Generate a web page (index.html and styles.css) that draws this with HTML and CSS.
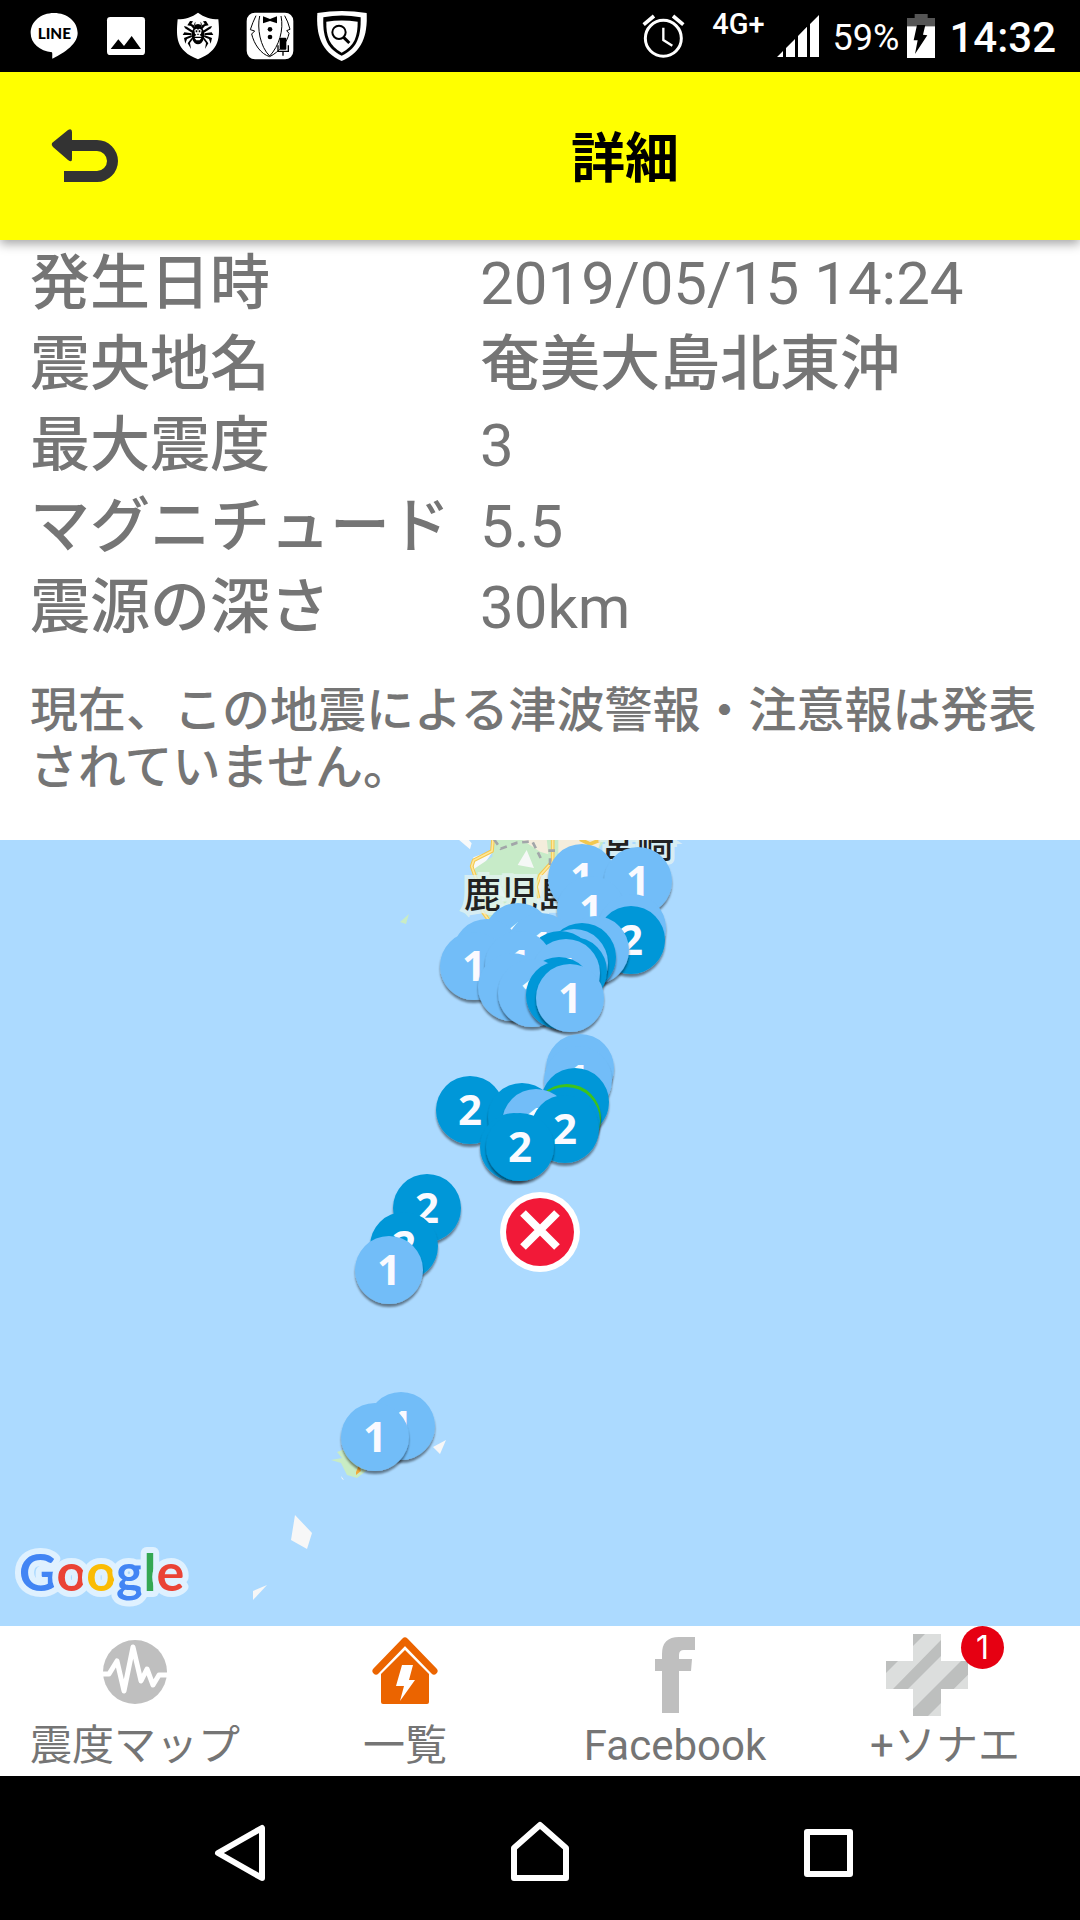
FILE: index.html
```html
<!DOCTYPE html>
<html lang="ja">
<head>
    <meta charset="UTF-8">
    <meta name="viewport" content="width=device-width, initial-scale=1.0">
    <title>詳細</title>
    <link rel="stylesheet" href="styles.css">
</head>
<body>
    <div class="status-bar">
        <div class="status-left">
            <svg class="status-icon" viewBox="90 36 144 144">
                <path fill="#fff" d="M162 39c-40 0-70 26-70 60 0 31 27 54 64 58 2 6 0 12 1 19 24-11 76-40 76-77 0-34-31-60-71-60z"/>
                <text class="line-text" x="163" y="117" text-anchor="middle">LINE</text>
            </svg>
            <svg class="status-icon" viewBox="306 36 144 144">
                <rect x="321" y="51" width="114" height="114" rx="10" fill="#fff"/>
                <path d="M332 147l23-29 17 20 23-30 28 39z"/>
            </svg>
            <svg class="status-icon" viewBox="522 36 144 144">
                <path fill="#fff" d="M594 38c18 14 38 19 61 20 5 54 6 94-61 120-67-26-66-66-61-120 23-1 43-6 61-20z"/>
                <path d="M582 88l-9-10-11-2 8-13 9 1-5 8 7 3 6 9zM606 88l9-10 11-2-8-13-9 1 5 8-7 3-6 9zM577 99l-22-14-3-7 8 2 20 13zM611 99l22-14 3-7-8 2-20 13zM575 105l-27 0 5-8 22 3zM613 105l27 0-5-8-22 3zM576 111l-15 6-5 14-4-17 23-9zM612 111l15 6 5 14 4-17-23-9zM577 119l-7 10 3 18-10-17 12-17zM611 119l7 10-3 18 10-17-12-17z"/>
                <path d="M584 80q-4-9 3-15l-2 9 9-2 9 2-2-9q7 6 3 15l8 14v22q-7 17-18 17t-18-17V94z"/>
                <path d="M583 90l6-4 5 3 5-3 6 4-2 11-4 3 6 6H583l6-6-4-3zM584 114h20l-5 7h-10z" fill="#fff"/>
                <path d="M587 91h5v6h-5zM596 91h5v6h-5zM592 101h4v4h-4z"/>
            </svg>
            <svg class="status-icon" viewBox="738 36 144 144">
                <rect x="740" y="38" width="140" height="140" rx="25" fill="#fff"/>
                <path fill="none" stroke="#000" stroke-width="3" d="M768 47q-10 20-17 42l13 4-9 9c7 30 27 60 54 68 28-14 54-44 58-70l-7-8 10-4q-6-24-16-41M779 48c-8 36 1 92 30 120 28-30 43-78 34-120"/>
                <path d="M789 49l21 8 21-8v21l-21-7-21 7z"/>
                <circle cx="810" cy="88" r="7"/><circle cx="810" cy="111" r="7"/>
                <rect x="839" y="113" width="20" height="36" rx="3"/>
                <path d="M834 136v18h31v-18M849 154v13" fill="none" stroke="#000" stroke-width="4"/>
            </svg>
            <svg class="status-icon" viewBox="954 36 144 144">
                <path fill="#fff" d="M952 39q73-12 148 0c3 65-12 117-75 144-62-27-77-79-73-144z"/>
                <path d="M970 52q55-11 112 0c1 53-8 93-57 115-48-22-57-62-55-115z"/>
                <path fill="#fff" d="M979 65q46-7 94 0c0 43-9 73-48 93-37-20-47-50-46-93z"/>
                <circle cx="1017" cy="97" r="20" fill="none" stroke="#000" stroke-width="6"/>
                <path d="M1031 112l17 17" stroke="#000" stroke-width="9"/>
            </svg>
        </div>
        <div class="status-right">
            <svg class="alarm-icon" viewBox="66 42 132 132">
                <g fill="none" stroke="#fff">
                    <circle cx="130" cy="115" r="54" stroke-width="9"/>
                    <path d="M71 74l31-26M190 74l-31-26" stroke-width="11"/>
                    <path d="M130 83v37l27 17" stroke-width="7"/>
                </g>
            </svg>
            <span class="network">4G+</span>
            <svg class="signal-icon" viewBox="468 48 126 126">
                <path fill="#fff" d="M468 174l18-18v18zM495 147l27-27v54h-27zM531 111l27-28v91h-27zM567 75l27-27v126h-27z"/>
            </svg>
            <span class="battery-level">59%</span>
            <svg class="battery-icon" viewBox="864 39 84 132">
                <path fill="#555" d="M864 51h23V39h39v12h22v26h-84z"/>
                <path fill="#fff" d="M864 76h84v95h-84z"/>
                <path d="M894 72h25l-7 29 13 2-37 56 8-41h-12z"/>
            </svg>
            <span class="clock">14:32</span>
        </div>
    </div>

    <header class="header">
        <button class="back-btn" type="button" aria-label="戻る">
            <svg class="back-icon" viewBox="0 0 66 54">
                <path fill="#333" d="M0 14L16 1q4-2 4 2v8h25a21 21 0 0 1 0 42H12V42h33a10 10 0 0 0 0-20H20v8q0 4-4 1L1 18q-2-2-1-4z"/>
            </svg>
        </button>
        <h1 class="title">詳細</h1>
    </header>

    <main class="detail">
        <table class="detail-table">
            <tr><th scope="row">発生日時</th><td>2019/05/15 14:24</td></tr>
            <tr><th scope="row">震央地名</th><td class="place-name">奄美大島北東沖</td></tr>
            <tr><th scope="row">最大震度</th><td>3</td></tr>
            <tr><th scope="row">マグニチュード</th><td>5.5</td></tr>
            <tr><th scope="row">震源の深さ</th><td>30km</td></tr>
        </table>
        <p class="tsunami-note">現在、この地震による津波警報・注意報は発表されていません。</p>
    </main>

    <div class="map">
        <svg class="map-canvas" viewBox="0 0 1080 786" preserveAspectRatio="xMidYMid slice">
            <defs>
                <filter id="shadow" x="-20%" y="-20%" width="140%" height="150%">
                    <feDropShadow dx="0" dy="3" stdDeviation="1" flood-color="#000" flood-opacity="0.45"/>
                </filter>
                <g id="pin1">
                    <circle r="34" fill="#72bdf8" filter="url(#shadow)"/>
                    <text class="pin-text" y="15">1</text>
                </g>
                <g id="pin2">
                    <circle r="34" fill="#0397d8" filter="url(#shadow)"/>
                    <text class="pin-text" y="15">2</text>
                </g>
                <g id="pin3">
                    <circle r="34" fill="#3ec31a" filter="url(#shadow)"/>
                    <text class="pin-text" y="15">3</text>
                </g>
            </defs>

            <!-- land, southern Kyushu -->
            <g transform="translate(420 -10) scale(0.333333)">
                <path fill="#f7f9fa" d="M115 28h30l10 12-5 18zM160 82l62-22-25 35-35 25zM110 20h60l-20 9z"/>
                <path fill="#c7ebc8" d="M218 25h340l-60 90-80 120-130 20-80 15-25-50-13-55-5-50 52-35z"/>
                <path fill="#f4eddc" d="M300 25h80l5 48-25-8zM388 100l-38 50v60l40 30 40-40zM415 25h130l-20 60-110 20z"/>
                <path fill="#f5f8f6" d="M320 60l22 54-49-9zM240 165l18 40-25-12z"/>
                <path fill="none" stroke="#f3c84f" stroke-width="11" stroke-linejoin="round" d="M219 28l-3 35-55 28-6 18 14 40 20 55-2 40 22 30M398 26v68l-38 42-12 34 8 35M480 28l30 14 30-12"/>
                <path fill="none" stroke="#ffe79a" stroke-width="5" d="M219 28l-3 35-55 28-6 18 14 40 20 55-2 40 22 30M398 26v68l-38 42-12 34 8 35"/>
                <path fill="none" stroke="#a2a6a9" stroke-width="8" stroke-dasharray="20 14" d="M222 28l20 28 50-18 45-4 25 50M385 62h30M390 85v30"/>
                <path fill="#acdaff" d="M355 215l20-50 60 20 10 70-90 10z"/>
            </g>
            <text class="place" x="464" y="68">鹿児島</text>
            <text class="place" x="600" y="18">宮崎</text>

            <!-- small islands -->
            <path fill="#c9ecc4" d="M400 82l9-8-3 10z"/>
            <path fill="#c9ecc4" d="M331 620l11-2-5-6 8-3 12 10 9 12-9 7-10-3-6-12z"/>
            <path fill="#f2aa3c" d="M356 632l3-7 2 6-5 4z"/>
            <path fill="#f7f7f7" d="M433 607l13-7-6 14zM295 675l17 18-5 16-16-9zM253 751l14-6-14 15zM341 636l3 4-2-1z"/>

            <!-- intensity pins, north to south -->
            <use href="#pin1" x="582" y="38"/>
            <use href="#pin1" x="638" y="41"/>
            <use href="#pin1" x="591" y="70"/>
            <use href="#pin1" x="632" y="88"/>
            <use href="#pin2" x="631" y="100"/>
            <use href="#pin1" x="518" y="97"/>
            <use href="#pin1" x="487" y="113"/>
            <use href="#pin1" x="541" y="107"/>
            <use href="#pin1" x="595" y="110"/>
            <use href="#pin2" x="582" y="117"/>
            <use href="#pin1" x="574" y="123"/>
            <use href="#pin2" x="560" y="125"/>
            <use href="#pin1" x="474" y="126"/>
            <use href="#pin1" x="519" y="125"/>
            <use href="#pin2" x="573" y="131"/>
            <use href="#pin1" x="566" y="133"/>
            <use href="#pin1" x="512" y="147"/>
            <use href="#pin2" x="559" y="151"/>
            <use href="#pin1" x="532" y="153"/>
            <use href="#pin2" x="560" y="155"/>
            <use href="#pin1" x="570" y="158"/>

            <use href="#pin1" x="580" y="228"/>
            <use href="#pin1" x="578" y="240"/>
            <use href="#pin2" x="575" y="262"/>
            <use href="#pin2" x="470" y="270"/>
            <use href="#pin2" x="522" y="277"/>
            <use href="#pin3" x="567" y="278"/>
            <use href="#pin2" x="566" y="281"/>
            <use href="#pin1" x="536" y="283"/>
            <use href="#pin2" x="565" y="289"/>
            <use href="#pin2" x="514" y="307"/>
            <use href="#pin2" x="520" y="307"/>

            <use href="#pin2" x="427" y="368"/>
            <use href="#pin2" x="404" y="406"/>
            <use href="#pin1" x="389" y="430"/>
            <use href="#pin1" x="401" y="586"/>
            <use href="#pin1" x="375" y="597"/>

            <!-- epicentre -->
            <circle cx="540" cy="392" r="40" fill="#fff"/>
            <circle cx="540" cy="392" r="34" fill="#f21938"/>
            <path d="M523 373l34 34M557 373l-34 34" stroke="#fff" stroke-width="8"/>

            <text class="google" x="19" y="751"><tspan fill="#4285f4">G</tspan><tspan fill="#ea4335">o</tspan><tspan fill="#fbbc05">o</tspan><tspan fill="#4285f4">g</tspan><tspan fill="#34a853">l</tspan><tspan fill="#ea4335">e</tspan></text>
        </svg>
    </div>

    <nav class="tabs">
        <a class="tab" href="#map">
            <svg class="tab-icon" viewBox="0 0 84 84">
                <circle cx="42" cy="40" r="32" fill="#bfbfbf"/>
                <path d="M10 42h6l8-13 7 30 9-44 8 34 6-12 6 16 6-10h8" fill="none" stroke="#fff" stroke-width="5" stroke-linejoin="round"/>
            </svg>
            <span class="tab-label">震度マップ</span>
        </a>
        <a class="tab" href="#list">
            <svg class="tab-icon" viewBox="0 0 84 84">
                <path d="M13 39l29-30 29 30" fill="none" stroke="#eb6400" stroke-width="7" stroke-linecap="round" stroke-linejoin="round"/>
                <path d="M42 18l24 24v28q0 2-2 2H20q-2 0-2-2V42z" fill="#eb6400"/>
                <path d="M39 33h11l-4 15h6L37 69l4-15h-8z" fill="#fff"/>
            </svg>
            <span class="tab-label">一覧</span>
        </a>
        <a class="tab" href="#facebook">
            <svg class="tab-icon" viewBox="0 0 84 84">
                <path d="M29 81V39h-7V27h7v-5Q29 5 46 5h16v13H51q-5 0-5 5v4h13l-1 12H46v42z" fill="#bfbfbf"/>
            </svg>
            <span class="tab-label">Facebook</span>
        </a>
        <a class="tab" href="#sonae">
            <span class="icon-wrap">
                <svg class="tab-icon" viewBox="0 0 84 84">
                    <clipPath id="plus"><path d="M28 2h28v27h27v28H56v27H28V57H1V29h27z"/></clipPath>
                    <g clip-path="url(#plus)">
                        <path fill="#dcdedd" d="M0 0h84v84H0z"/>
                        <path d="M28 0h14L0 42V28zM8 57h15l33-33V8zM28 77v8h14l42-42V29h-8zM68 58l16-16v16z" fill="#bdbfbe"/>
                        <path d="M68 58l17-17v17z" fill="#dcdedd"/>
                    </g>
                </svg>
                <span class="badge">1</span>
            </span>
            <span class="tab-label">+ソナエ</span>
        </a>
    </nav>

    <div class="nav-bar">
        <button class="nav-btn" type="button" aria-label="戻る">
            <svg class="nav-icon" viewBox="12 0 66 66"><path d="M55 9v50L11 34z"/></svg>
        </button>
        <button class="nav-btn" type="button" aria-label="ホーム">
            <svg class="nav-icon" viewBox="0 0 66 66"><path d="M33 6l26 23v30H7V29z"/></svg>
        </button>
        <button class="nav-btn" type="button" aria-label="履歴">
            <svg class="nav-icon" viewBox="0 0 66 66"><path d="M12 13h43v42H12z"/></svg>
        </button>
    </div>
</body>
</html>
```
FILE: styles.css
```css
* {
    margin: 0;
    padding: 0;
    box-sizing: border-box;
}

body {
    font-family: Roboto, "Noto Sans CJK JP", sans-serif;
    background: #fff;
    color: #757575;
    min-height: 100vh;
    display: flex;
    flex-direction: column;
}

button {
    background: none;
    border: none;
    cursor: pointer;
}

svg {
    display: block;
    overflow: visible;
}

/* status bar */
.status-bar {
    background: #000;
    color: #fff;
    height: 72px;
    padding: 0 24px 0 30px;
    display: flex;
    justify-content: space-between;
    align-items: center;
}

.status-left {
    display: flex;
    gap: 24px;
}

.status-icon {
    width: 48px;
    height: 48px;
}

.line-text {
    font-family: Lato, sans-serif;
    font-size: 46px;
    font-weight: 900;
}

.status-right {
    display: flex;
    align-items: center;
    gap: 14px;
}

.alarm-icon {
    width: 44px;
    height: 44px;
    margin-right: 12px;
}

.network {
    font-size: 29px;
    font-weight: 500;
    line-height: 32px;
    padding-bottom: 24px;
}

.signal-icon {
    width: 42px;
    height: 42px;
    margin-left: -2px;
}

.battery-level {
    font-size: 36px;
    padding-top: 3px;
}

.battery-icon {
    width: 28px;
    height: 44px;
    margin-left: -6px;
}

.clock {
    font-size: 42px;
    font-weight: 500;
    padding-top: 2px;
}

/* header */
.header {
    background: #ff0;
    height: 168px;
    display: flex;
    align-items: center;
    box-shadow: 0 4px 10px rgba(0,0,0,0.35);
    position: relative;
}

.back-btn {
    width: 170px;
    height: 100%;
    padding-left: 52px;
}

.back-icon {
    width: 66px;
    height: 54px;
}

.title {
    flex: 1;
    color: #000;
    font-size: 54px;
    font-weight: 700;
    text-align: center;
    padding-bottom: 4px;
}

/* detail */
.detail {
    padding: 3px 30px 44px;
}

.detail-table {
    width: 100%;
    border-collapse: collapse;
    font-size: 60px;
    line-height: 81px;
    text-align: left;
}

.detail-table th {
    width: 450px;
    font-weight: 500;
    white-space: nowrap;
}

.detail-table .place-name {
    font-weight: 500;
}

.tsunami-note {
    margin-top: 34px;
    font-size: 48px;
    font-weight: 500;
    line-height: 57px;
}

/* map */
.map {
    flex: 1;
    min-height: 400px;
    background: #acdaff;
    overflow: hidden;
    display: flex;
}

.map-canvas {
    width: 100%;
    overflow: hidden;
}

.pin-text {
    font-family: "Noto Sans", sans-serif;
    font-size: 42px;
    font-weight: 700;
    fill: #fafaff;
    text-anchor: middle;
}

.place {
    font-family: "Noto Sans CJK JP", sans-serif;
    font-size: 37px;
    font-weight: 500;
    fill: #222;
    stroke: rgba(226,243,240,0.8);
    stroke-width: 8px;
    paint-order: stroke;
}

.google {
    font-family: Lato, sans-serif;
    font-size: 52px;
    font-weight: 700;
    stroke: #dff1ff;
    stroke-width: 12px;
    stroke-linejoin: round;
    paint-order: stroke;
}

/* tabs */
.tabs {
    background: #fff;
    height: 150px;
    display: grid;
    grid-template-columns: repeat(4, 1fr);
}

.tab {
    display: flex;
    flex-direction: column;
    align-items: center;
    padding-top: 6px;
    color: #757575;
    text-decoration: none;
}

.icon-wrap {
    position: relative;
    margin-right: 36px;
}

.tab-icon {
    width: 84px;
    height: 84px;
}

.tab-label {
    font-size: 42px;
    line-height: 60px;
}

.badge {
    position: absolute;
    top: -6px;
    right: -35px;
    width: 43px;
    height: 43px;
    border-radius: 50%;
    background: #e60012;
    color: #fff;
    font-family: Inter, sans-serif;
    font-size: 32px;
    line-height: 43px;
    text-align: center;
}

/* system navigation */
.nav-bar {
    background: #000;
    height: 144px;
    padding: 8px 108px 0;
    display: grid;
    grid-template-columns: repeat(3, 1fr);
}

.nav-btn {
    display: flex;
    align-items: center;
    justify-content: center;
}

.nav-icon {
    width: 66px;
    height: 66px;
    fill: none;
    stroke: #fff;
    stroke-width: 6px;
    stroke-linejoin: round;
}
```
